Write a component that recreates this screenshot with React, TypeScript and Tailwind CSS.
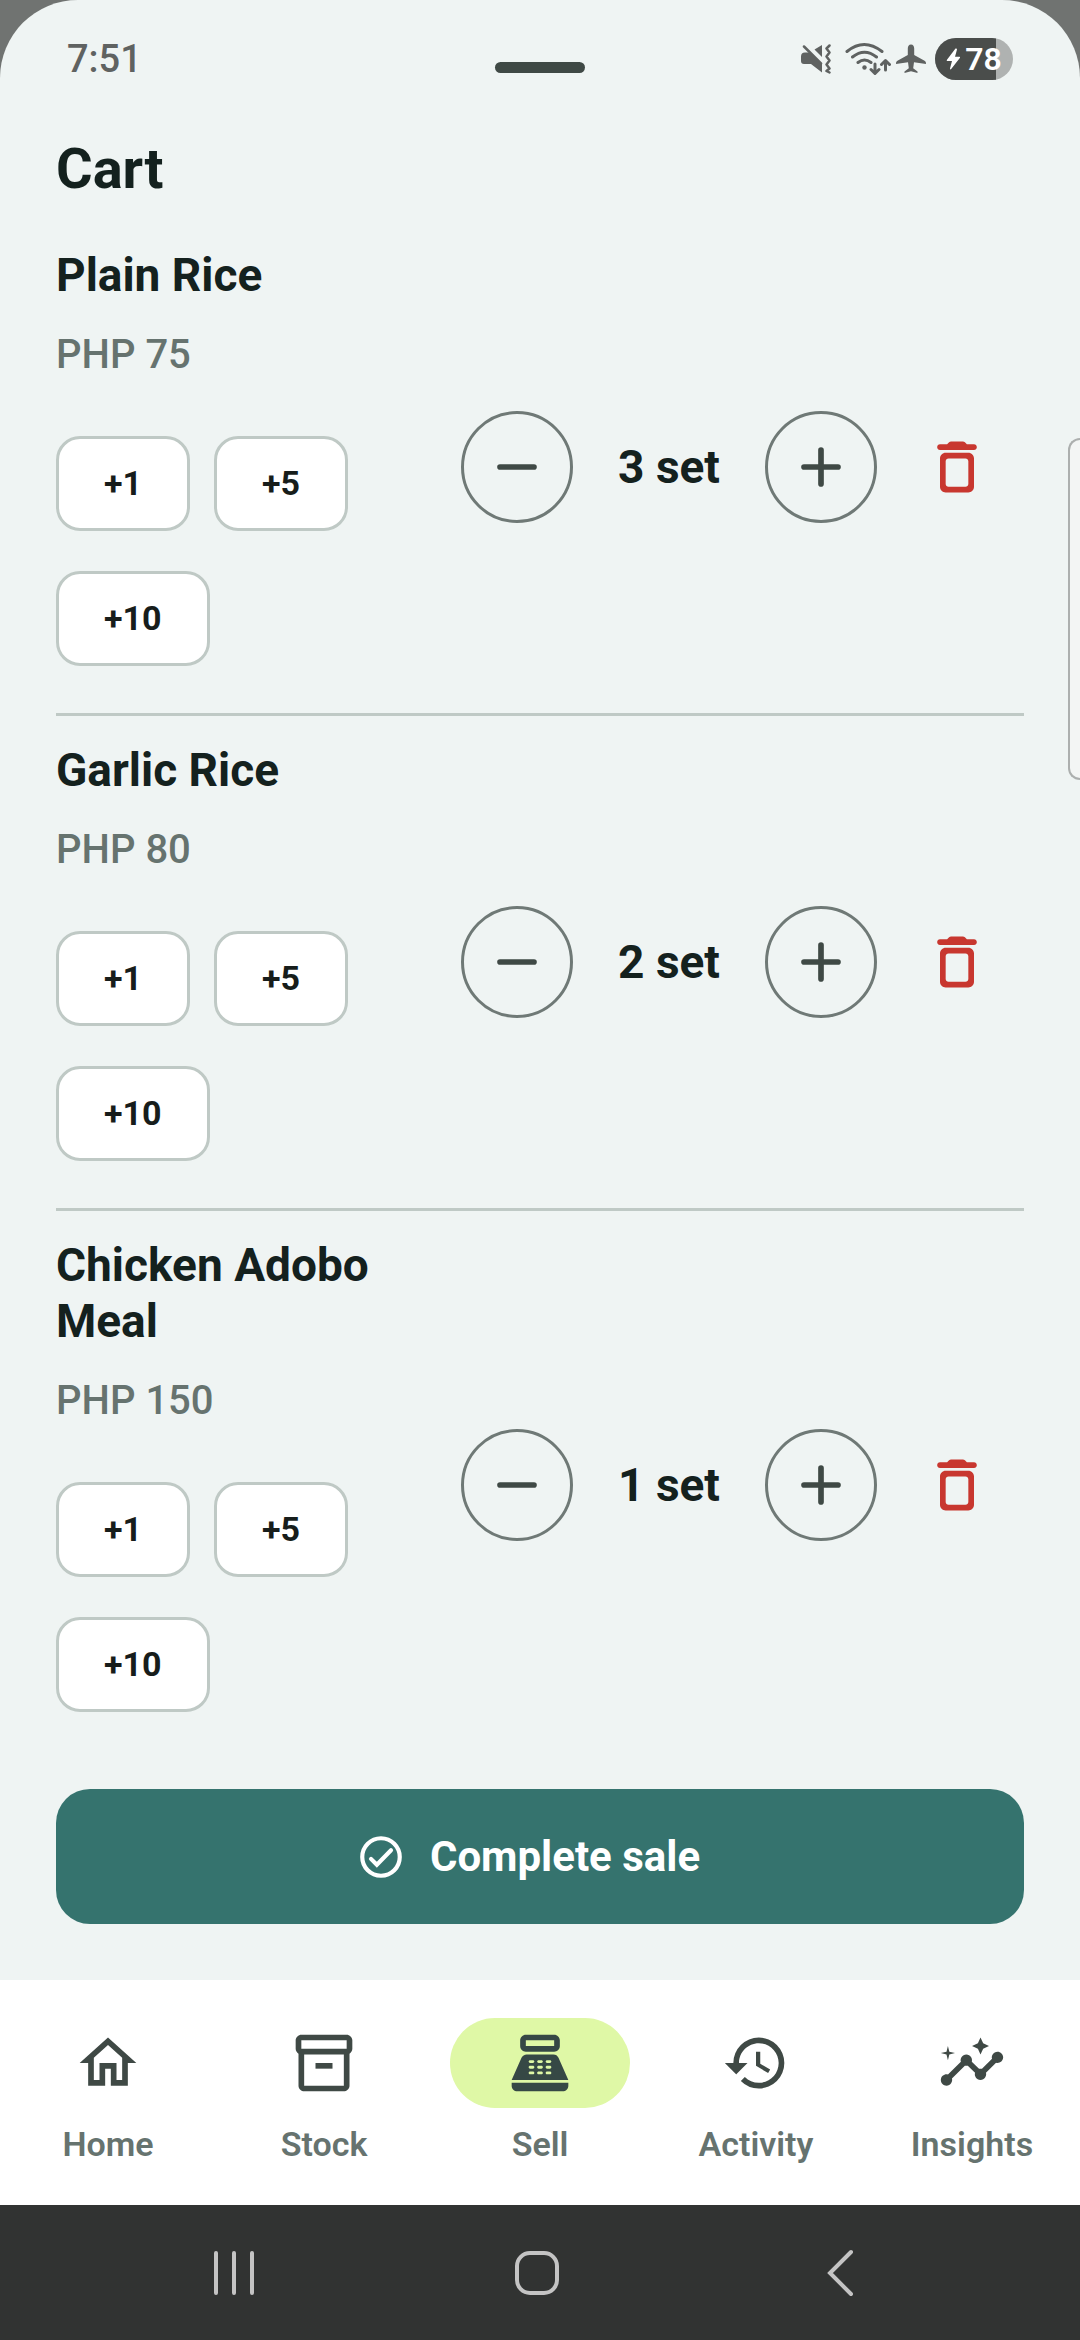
import type { ReactNode } from 'react';
import type { IconType } from 'react-icons';
import { MdHistory, MdInsights, MdOutlineHome, MdOutlineInventory2, MdPointOfSale } from 'react-icons/md';

interface CartItem {
  name: string;
  price: number;
  quantity: number;
}

interface NavItem {
  label: string;
  icon: IconType;
  active?: boolean;
}

const CART: CartItem[] = [
  { name: 'Plain Rice', price: 75, quantity: 3 },
  { name: 'Garlic Rice', price: 80, quantity: 2 },
  { name: 'Chicken Adobo Meal', price: 150, quantity: 1 },
];

const NAV: NavItem[] = [
  { label: 'Home', icon: MdOutlineHome },
  { label: 'Stock', icon: MdOutlineInventory2 },
  { label: 'Sell', icon: MdPointOfSale, active: true },
  { label: 'Activity', icon: MdHistory },
  { label: 'Insights', icon: MdInsights },
];

const STEPS = [1, 5, 10];

export default function App() {
  return (
    <div className="flex min-h-screen flex-col bg-[#707371] font-[Roboto,sans-serif]">
      <div className="relative flex flex-1 flex-col rounded-t-[78px] bg-[#eff4f3]">
        <StatusBar />
        <main className="flex flex-1 flex-col px-14 pb-14">
          <h1 className="text-[56px] leading-[68px] font-bold text-[#14211e]">Cart</h1>
          <ul className="mt-[18px] divide-y-3 divide-[#bfc9c5]">
            {CART.map((item) => (
              <CartRow key={item.name} item={item} />
            ))}
          </ul>
          <button
            type="button"
            className="mt-auto flex h-[135px] w-full items-center justify-center gap-6 rounded-[34px] bg-[#35736e] pr-6 text-[42px] font-bold text-white"
          >
            <CheckCircle />
            Complete sale
          </button>
        </main>
        {/* edge panel handle of the system */}
        <div className="absolute top-[438px] right-0 h-[342px] w-3 rounded-l-xl border-2 border-r-0 border-[#acafae] bg-[#f3f5f4]" />
      </div>
      <BottomNav />
      <SystemNav />
    </div>
  );
}

function StatusBar() {
  return (
    <header className="grid h-[135px] grid-cols-3 items-start px-[67px] pt-9 text-[#5f6261]">
      <span className="text-[38px] leading-[46px] font-medium">7:51</span>
      <span className="mt-[26px] h-[11px] w-[90px] justify-self-center rounded-full bg-[#3f4945]" />
      <div className="flex h-[46px] items-center justify-self-end">
        <MutedIcon />
        <WifiIcon />
        <PlaneIcon />
        <Battery level={78} />
      </div>
    </header>
  );
}

function Battery({ level }: { level: number }) {
  return (
    <div className="relative ml-2 flex h-[42px] w-[78px] items-center justify-center gap-1 overflow-hidden rounded-full bg-[#afb2b1] text-white">
      <div className="absolute inset-y-0 left-0 bg-[#4a4d4b]" style={{ width: `${level}%` }} />
      <svg viewBox="0 0 15 22" className="relative h-[22px] w-[15px]" fill="currentColor">
        <path d="M9.5 0.5 L0.8 12 Q0.4 13 1.4 13 L6 13 L4 20.5 Q4 22 5.2 21 L14 9.8 Q14.4 8.8 13.4 8.8 L9 8.8 L11 1.5 Q11 0 9.5 0.5Z" />
      </svg>
      <span className="relative text-[32px] leading-[42px] font-semibold">{level}</span>
    </div>
  );
}

function CartRow({ item }: { item: CartItem }) {
  return (
    <li className="flex items-center py-[26px]">
      <div className="min-w-0 flex-1 pr-6 pb-[21px]">
        <h2 className="text-[46px] leading-14 font-bold text-[#14211e]">{item.name}</h2>
        <p className="mt-6 text-[40px] leading-14 font-medium text-[#66736f]">PHP {item.price}</p>
        <div className="mt-[53px] flex flex-wrap gap-x-6 gap-y-10">
          {STEPS.map((step) => (
            <button
              key={step}
              type="button"
              className="h-[95px] rounded-3xl border-3 border-[#bfc9c5] bg-white px-[45px] text-[34px] font-bold text-[#171d1b]"
            >
              +{step}
            </button>
          ))}
        </div>
      </div>
      <div className="flex shrink-0 items-center">
        <RoundButton label={`Remove one ${item.name}`}>
          <path d="M6 12h12" />
        </RoundButton>
        <span className="w-[192px] text-center text-[46px] leading-14 font-bold text-[#14211e]">
          {item.quantity} set
        </span>
        <RoundButton label={`Add one ${item.name}`}>
          <path d="M6 12h12M12 6v12" />
        </RoundButton>
        <button
          type="button"
          aria-label={`Delete ${item.name}`}
          className="ml-3 flex size-[135px] items-center justify-center text-[#c8372f]"
        >
          <TrashIcon />
        </button>
      </div>
    </li>
  );
}

function RoundButton({ label, children }: { label: string; children: ReactNode }) {
  return (
    <button
      type="button"
      aria-label={label}
      className="flex size-28 items-center justify-center rounded-full border-3 border-[#6f7976] text-[#3f4945]"
    >
      <svg viewBox="0 0 24 24" className="size-[68px]" fill="none" stroke="currentColor" strokeWidth="2" strokeLinecap="round">
        {children}
      </svg>
    </button>
  );
}

function BottomNav() {
  return (
    <nav className="grid h-[225px] grid-cols-5 bg-white pt-[38px]">
      {NAV.map(({ label, icon: Icon, active }) => (
        <a key={label} href={`#${label.toLowerCase()}`} className="flex flex-col items-center gap-4">
          <span
            className={
              active
                ? 'flex h-[90px] w-[180px] items-center justify-center rounded-full bg-[#dff8a6] text-[#364845]'
                : 'flex h-[90px] w-[180px] items-center justify-center text-[#3f4945]'
            }
          >
            <Icon className="size-[68px]" />
          </span>
          <span className="text-[34px] leading-[40px] font-semibold text-[#66736f]">{label}</span>
        </a>
      ))}
    </nav>
  );
}

function SystemNav() {
  return (
    <div className="flex h-[135px] items-center justify-between bg-[#313332] pr-[210px] pl-[204px] text-[#c4c4c4]">
      <button type="button" aria-label="Recent apps" className="flex w-[60px] justify-center">
        <svg viewBox="0 0 44 46" className="h-[46px] w-11" fill="none" stroke="currentColor" strokeWidth="4" strokeLinecap="round">
          <path d="M4 3v40M22 3v40M40 3v40" />
        </svg>
      </button>
      <button type="button" aria-label="Home screen" className="flex w-[60px] justify-center">
        <svg viewBox="0 0 46 46" className="size-[46px]" fill="none" stroke="currentColor" strokeWidth="4">
          <rect x="3" y="3" width="40" height="40" rx="13" />
        </svg>
      </button>
      <button type="button" aria-label="Back" className="flex w-[60px] justify-center">
        <svg viewBox="0 0 28 48" className="h-12 w-7" fill="none" stroke="currentColor" strokeWidth="4" strokeLinecap="round">
          <path d="M25 3 4 24l21 21" />
        </svg>
      </button>
    </div>
  );
}

function CheckCircle() {
  return (
    <svg viewBox="0 0 24 24" className="size-[50px]" fill="none" stroke="currentColor" strokeWidth="2" strokeLinecap="round">
      <circle cx="12" cy="12" r="9" />
      <path d="m7.2 12.9 2.8 2.8 6.8-6.9" />
    </svg>
  );
}

function TrashIcon() {
  return (
    <svg viewBox="0 0 24 24" className="size-[68px]" fill="currentColor">
      <path d="M6 19c0 1.1.9 2 2 2h8c1.1 0 2-.9 2-2V9c0-1.1-.9-2-2-2H8c-1.1 0-2 .9-2 2v10zM9 9h6c.55 0 1 .45 1 1v8c0 .55-.45 1-1 1H9c-.55 0-1-.45-1-1v-8c0-.55.45-1 1-1zm6.5-5-.71-.71c-.18-.18-.44-.29-.7-.29H9.91c-.26 0-.52.11-.7.29L8.5 4H6c-.55 0-1 .45-1 1s.45 1 1 1h12c.55 0 1-.45 1-1s-.45-1-1-1h-2.5z" />
    </svg>
  );
}

function MutedIcon() {
  return (
    <svg viewBox="0 0 32 30" className="h-[30px] w-8" fill="currentColor">
      <path d="M0 12.5q0-4 4-4h5L21 20v8.5L10 20H3q-3 0-3-3zM21 1v12l-7.5-7.5z" />
      <path
        d="M3 2.5l17 17M28.5 1.5l-3 3 3 4-3 4 3 4-3 4 3 4-3 2.5 3 1.5"
        fill="none"
        stroke="currentColor"
        strokeWidth="2.5"
        strokeLinecap="round"
        strokeLinejoin="round"
      />
    </svg>
  );
}

function WifiIcon() {
  return (
    <svg viewBox="0 0 46 34" className="ml-3 h-[34px] w-[46px]" fill="none" stroke="currentColor" strokeWidth="3" strokeLinecap="round">
      <path d="M2 9.5q17-14 35 0M7.5 15q12-9.5 24 0M13 20.5q6.5-5 13 0" />
      <circle cx="19.5" cy="25.5" r="2.2" fill="currentColor" stroke="none" />
      <path d="M30 22v9M26 27.5l4 4 4-4M40.5 28v-9M36.5 22.5l4-4 4 4" strokeLinejoin="round" />
    </svg>
  );
}

function PlaneIcon() {
  return (
    <svg viewBox="0 0 32 30" className="ml-1 h-[30px] w-8" fill="currentColor">
      <path d="M16 0.5c2.2 0 3.2 1.8 3.2 4V11L30 17q1.2 1 1 3l-12-1.8-.8 6 4.3 3.3V29L16 27.2 9.5 29v-1.5l4.3-3.3-.8-6L1 20q-.2-2 1-3l10.8-6V4.5c0-2.2 1-4 3.2-4z" />
    </svg>
  );
}
